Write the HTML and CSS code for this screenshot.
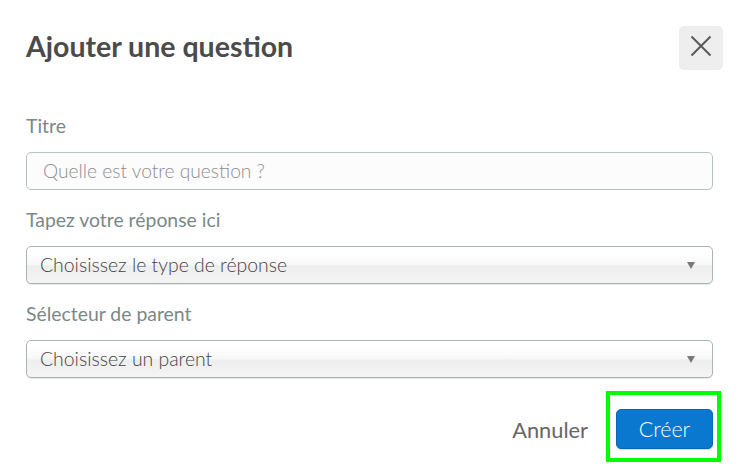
FILE: index.html
```html
<!DOCTYPE html>
<html lang="fr">
<head>
<meta charset="utf-8">
<title>Ajouter une question</title>
<link rel="stylesheet" href="styles.css">
</head>
<body>
<div class="dialog">
  <div class="header">
    <h1 class="title">Ajouter une question</h1>
    <button class="close" type="button" aria-label="Fermer">
      <svg width="22" height="22" viewBox="0 0 22 22"><path d="M1.5 1.5 L20.5 20.5 M20.5 1.5 L1.5 20.5" stroke="#5a5a5a" stroke-width="2" fill="none"/></svg>
    </button>
  </div>
  <div class="fields">
    <div class="field">
      <label class="label">Titre</label>
      <div class="input"><span class="placeholder">Quelle est votre question ?</span></div>
    </div>
    <div class="field">
      <label class="label">Tapez votre réponse ici</label>
      <div class="select"><span class="select-text">Choisissez le type de réponse</span><span class="arrow"></span></div>
    </div>
    <div class="field">
      <label class="label">Sélecteur de parent</label>
      <div class="select"><span class="select-text">Choisissez un parent</span><span class="arrow"></span></div>
    </div>
  </div>
  <div class="footer">
    <button class="cancel" type="button">Annuler</button>
    <div class="highlight-wrap">
      <button class="create" type="button">Créer</button>
      <span class="highlight"></span>
    </div>
  </div>
</div>
</body>
</html>
```
FILE: styles.css
```css
html, body {
  margin: 0;
  padding: 0;
  background: #ffffff;
}
body {
  font-family: Lato, "Open Sans", "Liberation Sans", sans-serif;
  width: 741px;
  height: 476px;
  overflow: hidden;
}
.dialog {
  padding: 26px 28px 0 26px;
}
.header {
  display: flex;
  justify-content: space-between;
  align-items: center;
  height: 44px;
}
.title {
  margin: 0;
  font-size: 28.5px;
  font-weight: 700;
  color: #4b4b4b;
  line-height: 30px;
  margin-top: -4px;
}
.close {
  width: 44px;
  height: 44px;
  margin-right: -10px;
  border: none;
  border-radius: 5px;
  background: #eeeeee;
  display: flex;
  align-items: center;
  justify-content: center;
  padding: 0;
  padding-bottom: 4px;
}
.fields {
  margin-top: 46px;
  display: flex;
  flex-direction: column;
  gap: 20px;
}
.field {
  display: flex;
  flex-direction: column;
  gap: 16px;
}
.label {
  font-size: 19.4px;
  line-height: 20px;
  color: #7a8889;
}
.input {
  height: 36px;
  border: 1px solid #b7c0c3;
  border-radius: 5px;
  background: #fcfcfc;
  display: flex;
  align-items: center;
  padding-left: 16px;
}
.placeholder {
  font-size: 19.2px;
  font-weight: 300;
  color: #8e8e8e;
  margin-top: -2px;
}
.select {
  height: 36px;
  border: 1px solid #aab2b5;
  border-radius: 5px;
  background: linear-gradient(#ffffff 20%, #f7f7f7 50%, #eeeeee 52%, #f4f4f4 100%);
  box-shadow: 0 1px 1px rgba(0, 0, 0, 0.1);
  display: flex;
  align-items: center;
  justify-content: space-between;
  padding: 0 17px 0 13px;
}
.select-text {
  font-size: 19.4px;
  font-weight: 300;
  color: #444444;
  margin-top: -2px;
}
.arrow {
  width: 0;
  height: 0;
  border-left: 4px solid transparent;
  border-right: 4px solid transparent;
  border-top: 7px solid #7a7a7a;
}
.footer {
  margin-top: 31px;
  display: flex;
  justify-content: flex-end;
  align-items: center;
  gap: 28px;
}
.cancel {
  background: none;
  border: none;
  padding: 0;
  font-family: inherit;
  font-size: 21.8px;
  color: #666666;
}
.highlight-wrap {
  position: relative;
}
.create {
  width: 97px;
  height: 40px;
  border: 1px solid #0a66b3;
  border-radius: 5px;
  background: #0a78cf;
  color: #ffffff;
  font-family: inherit;
  font-size: 21.5px;
  font-weight: 300;
  padding: 0;
  box-shadow: 0 1px 1px rgba(0, 0, 0, 0.15);
}
.highlight {
  position: absolute;
  left: -10px;
  right: -8px;
  top: -18px;
  bottom: -13px;
  border: 4px solid #00ff00;
}
```
